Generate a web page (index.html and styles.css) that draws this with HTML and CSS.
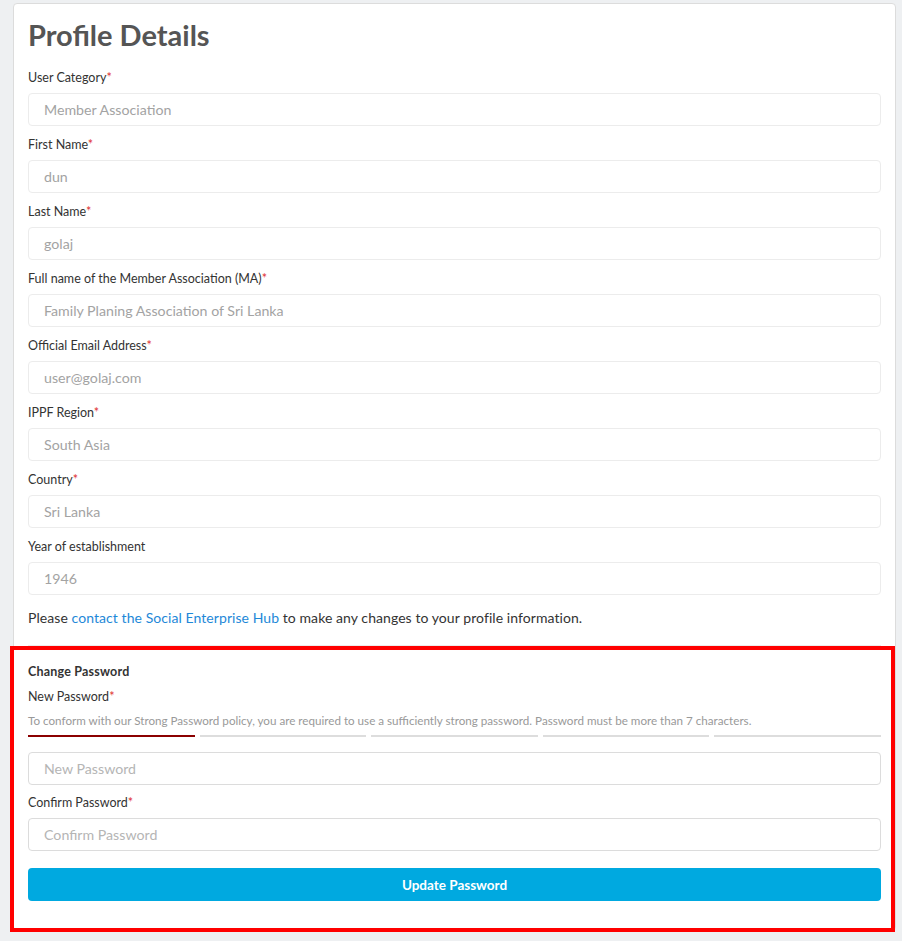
FILE: index.html
```html
<!DOCTYPE html>
<html lang="en">
<head>
<meta charset="utf-8">
<title>Profile Details</title>
<link rel="stylesheet" href="styles.css">
</head>
<body>
<div class="page">
  <div class="card">
    <h1 class="title">Profile Details</h1>

    <div class="field">
      <label class="label">User Category<span class="req">*</span></label>
      <input class="input" type="text" placeholder="Member Association" disabled>
    </div>
    <div class="field">
      <label class="label">First Name<span class="req">*</span></label>
      <input class="input" type="text" placeholder="dun" disabled>
    </div>
    <div class="field">
      <label class="label">Last Name<span class="req">*</span></label>
      <input class="input" type="text" placeholder="golaj" disabled>
    </div>
    <div class="field">
      <label class="label">Full name of the Member Association (MA)<span class="req">*</span></label>
      <input class="input" type="text" placeholder="Family Planing Association of Sri Lanka" disabled>
    </div>
    <div class="field">
      <label class="label">Official Email Address<span class="req">*</span></label>
      <input class="input" type="text" placeholder="user@golaj.com" disabled>
    </div>
    <div class="field">
      <label class="label">IPPF Region<span class="req">*</span></label>
      <input class="input" type="text" placeholder="South Asia" disabled>
    </div>
    <div class="field">
      <label class="label">Country<span class="req">*</span></label>
      <input class="input" type="text" placeholder="Sri Lanka" disabled>
    </div>
    <div class="field">
      <label class="label">Year of establishment</label>
      <input class="input" type="text" placeholder="1946" disabled>
    </div>

    <p class="note">Please <a class="link" href="#">contact the Social Enterprise Hub</a> to make any changes to your profile information.</p>

    <hr class="divider">

    <div class="pw-section">
      <div class="section-title">Change Password</div>
      <label class="label">New Password<span class="req">*</span></label>
      <div class="help">To conform with our Strong Password policy, you are required to use a sufficiently strong password. Password must be more than 7 characters.</div>
      <div class="strength">
        <span class="seg seg-on"></span>
        <span class="seg"></span>
        <span class="seg"></span>
        <span class="seg"></span>
        <span class="seg"></span>
      </div>
      <div class="field">
        <input class="input input-edit" type="password" placeholder="New Password">
      </div>
      <div class="field">
        <label class="label">Confirm Password<span class="req">*</span></label>
        <input class="input input-edit" type="password" placeholder="Confirm Password">
      </div>
      <button class="btn" type="button">Update Password</button>
    </div>
  </div>
</div>
<div class="highlight"></div>
</body>
</html>
```

FILE: styles.css
```css
* { box-sizing: border-box; }

html, body {
  margin: 0;
  padding: 0;
  background: #eef0f2;
  font-family: Lato, "Liberation Sans", sans-serif;
  color: #333;
}

.page {
  padding: 3px 6px 0 13px;
}

.card {
  background: #fff;
  border: 1px solid #dcdcdc;
  border-radius: 4px;
  padding: 13px 14px 29px 14px;
  height: 928px;
}

.title {
  margin: 0 0 16px 0;
  font-size: 29px;
  line-height: 36px;
  font-weight: 700;
  color: #555;
}

.field {
  margin-bottom: 10px;
}

.label {
  display: block;
  font-size: 12.5px;
  line-height: 18px;
  color: #333;
  margin-bottom: 6px;
}

.req {
  color: #e03131;
}

.input {
  display: block;
  width: 100%;
  height: 33px;
  border: 1px solid #ececec;
  border-radius: 4px;
  background: #fff;
  padding: 0 15px;
  font-family: Lato, "Liberation Sans", sans-serif;
  font-size: 14.2px;
  color: #555;
  outline: none;
}

.input::placeholder {
  color: #a3a3a3;
  opacity: 1;
}

.input-edit {
  border-color: #dcdcdc;
}

.input-edit::placeholder {
  color: #b5b5b5;
}

.note {
  margin: 13px 0 0 0;
  font-size: 14px;
  line-height: 20px;
  letter-spacing: 0.07px;
  color: #333;
}

.link {
  color: #1e88d8;
  text-decoration: none;
}

.divider {
  border: 0;
  border-top: 1px solid #ececec;
  margin: 17px 0 17px 0;
}

.section-title {
  font-size: 12.5px;
  line-height: 18px;
  font-weight: 700;
  letter-spacing: 0.2px;
  color: #333;
  margin-bottom: 7px;
}

.help {
  font-size: 11.65px;
  line-height: 18px;
  color: #999;
}

.strength {
  display: flex;
  gap: 5px;
  margin: 5px 0 15px 0;
}

.seg {
  flex: 1;
  height: 2px;
  background: #dddddd;
}

.seg-on {
  background: #8b0000;
}

.pw-section .field {
  margin-bottom: 9px;
}

.btn {
  display: block;
  width: 100%;
  height: 33px;
  margin-top: 17px;
  border: 0;
  border-radius: 4px;
  background: #00a9e0;
  color: #fff;
  font-family: Lato, "Liberation Sans", sans-serif;
  font-size: 13.5px;
  font-weight: 700;
  cursor: pointer;
}

.highlight {
  position: absolute;
  left: 10px;
  top: 646px;
  width: 885px;
  height: 286px;
  border: 4px solid #ff0000;
  pointer-events: none;
}
```
